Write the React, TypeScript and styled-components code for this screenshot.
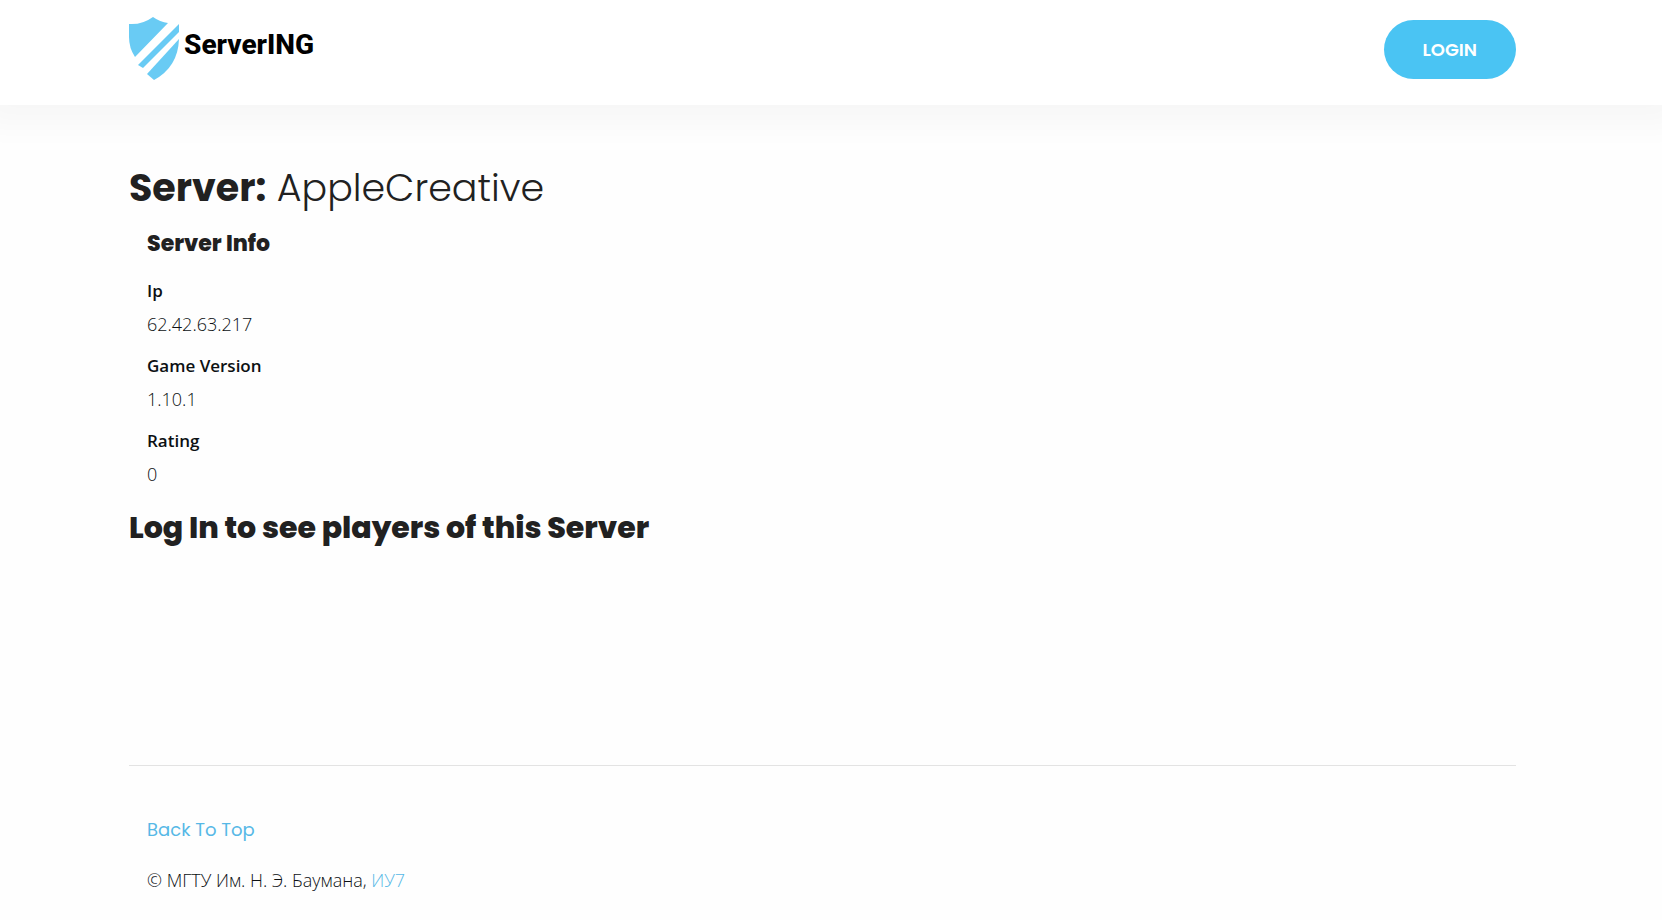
import React from "react";
import styled, { createGlobalStyle } from "styled-components";

const GlobalStyle = createGlobalStyle`
  *, *::before, *::after { box-sizing: border-box; }
  body {
    margin: 0;
    padding-right: 17px;
    background: #fefefe;
    color: #0c1013;
    font: 300 18px/30px "Open Sans", sans-serif;
  }
`;

const display = `"Poppins", "Inter", sans-serif`;

const Container = styled.div`
  width: 100%;
  max-width: 1419px;
  margin: 0 auto;
  padding: 0 16px;
`;

const Header = styled.header`
  margin-right: -17px;
  padding-right: 17px;
  background: #fff;
  box-shadow: 0 0 30px 20px rgba(0, 0, 0, 0.03);
`;

const Bar = styled(Container)`
  display: flex;
  align-items: flex-start;
  justify-content: space-between;
  min-height: 105px;
`;

const Brand = styled.a`
  display: flex;
  align-items: flex-start;
  gap: 5px;
  padding-top: 17px;
  color: #000;
  text-decoration: none;
`;

const BrandName = styled.span`
  padding-top: 10px;
  font: 800 28px/36px "Roboto", sans-serif;
`;

const LoginButton = styled.button`
  margin-top: 20px;
  padding: 0 39px;
  height: 59px;
  border: 0;
  border-radius: 30px;
  background: #4ac4f3;
  color: #fff;
  font: 600 18px/24px ${display};
  cursor: pointer;
`;

const Main = styled(Container).attrs({ as: "main" })`
  min-height: 660px;
  padding-top: 59px;
`;

const Title = styled.h1`
  margin: 0;
  color: #212121;
  font: 700 38px/48px ${display};
`;

const ServerName = styled.span`
  font-weight: 300;
`;

const Indented = styled.section`
  padding: 0 18px;
`;

const SectionTitle = styled.h2`
  margin: 17px 0;
  color: #212121;
  font: 800 22px/30px ${display};
`;

const Details = styled.dl`
  margin: 0;
`;

const Term = styled.dt`
  margin-bottom: 3px;
  font-size: 17px;
  font-weight: 600;
`;

const Value = styled.dd`
  margin: 0 0 12px;
`;

const Notice = styled.h2`
  margin: 19px 0 0;
  color: #212121;
  font: 800 30px/40px ${display};
`;

const FooterRow = styled.div`
  padding: 49px 18px 24px;
  border-top: 1px solid #e3e3e3;
`;

const Line = styled.p<{ $display?: boolean }>`
  margin: 0 0 20px;
  font-weight: ${(p) => (p.$display ? 400 : 300)};
  font-family: ${(p) => (p.$display ? display : "inherit")};
`;

const Link = styled.a`
  color: #56b8e6;
  text-decoration: none;
`;

const Shield = () => (
  <svg width="50" height="64" viewBox="0 0 50 64" fill="#69cbf4" aria-hidden="true">
    <path d="M0 7 Q13 8 24 0 Q31 5 39 6 L6 40 Q0 31 0 20 Z" />
    <path d="M50 7 L50 15 L14 51 L9 48 Z" />
    <path d="M50 22 Q49 50 25 63 L18 57 Z" />
  </svg>
);

const details = [
  { term: "Ip", value: "62.42.63.217" },
  { term: "Game Version", value: "1.10.1" },
  { term: "Rating", value: "0" },
];

export default function App() {
  return (
    <>
      <GlobalStyle />
      <Header id="top">
        <Bar>
          <Brand href="#top">
            <Shield />
            <BrandName>ServerING</BrandName>
          </Brand>
          <LoginButton type="button">LOGIN</LoginButton>
        </Bar>
      </Header>
      <Main>
        <Title>
          Server:<ServerName> AppleCreative</ServerName>
        </Title>
        <Indented>
          <SectionTitle>Server Info</SectionTitle>
          <Details>
            {details.map(({ term, value }) => (
              <React.Fragment key={term}>
                <Term>{term}</Term>
                <Value>{value}</Value>
              </React.Fragment>
            ))}
          </Details>
        </Indented>
        <Notice>Log In to see players of this Server</Notice>
      </Main>
      <Container as="footer">
        <FooterRow>
          <Line $display>
            <Link href="#top">Back To Top</Link>
          </Line>
          <Line>
            © МГТУ Им. Н. Э. Баумана, <Link href="#iu7">ИУ7</Link>
          </Line>
        </FooterRow>
      </Container>
    </>
  );
}
